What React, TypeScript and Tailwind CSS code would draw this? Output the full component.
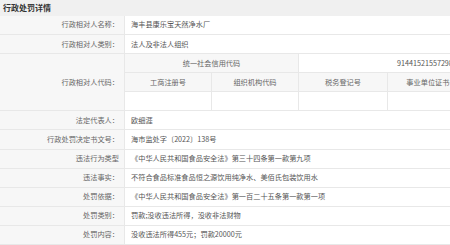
import React from 'react';

const rowsTop = [
  { label: '行政相对人名称：', value: '海丰县康乐宝天然净水厂' },
  { label: '行政相对人类别：', value: '法人及非法人组织' },
];

const rowsBottom = [
  { label: '法定代表人：', value: '欧细涯' },
  { label: '行政处罚决定书文号：', value: '海市监处字〔2022〕138号' },
  { label: '违法行为类型', value: '《中华人民共和国食品安全法》第三十四条第一款第九项' },
  { label: '违法事实：', value: '不符合食品标准食品恒之源饮用纯净水、美佰氏包装饮用水' },
  { label: '处罚依据：', value: '《中华人民共和国食品安全法》第一百二十五条第一款第一项' },
  { label: '处罚类别：', value: '罚款;没收违法所得，没收非法财物' },
  { label: '处罚内容：', value: '没收违法所得455元；罚款20000元' },
];

const codeHeads = ['工商注册号', '组织机构代码', '税务登记号', '事业单位证书号'];
const codeWidths = ['w-[87px]', 'w-[87px]', 'w-[89px]', 'w-[88px]'];

const Row = ({ label, value }: { label: string; value: string }) => (
  <div className="flex h-[19.1px] border-b border-[#e8e8e8]">
    <div className="w-[125px] shrink-0 bg-[#f7f7f7] border-r border-[#e8e8e8] flex items-center justify-end pr-[5px] text-[#666]">
      {label}
    </div>
    <div className="flex items-center pl-[6px] text-[#555] whitespace-nowrap">{value}</div>
  </div>
);

export default function App() {
  return (
    <div
      className="w-[450px] h-[245px] overflow-hidden bg-white text-[7.2px] leading-none"
      style={{ fontFamily: '"Noto Sans CJK SC", "Noto Sans", sans-serif' }}
    >
      <div className="h-[16px] bg-[#f0f0f0] flex items-center pl-[3px] text-[8px] font-bold text-[#333]">
        行政处罚详情
      </div>

      {rowsTop.map((r) => (
        <Row key={r.label} {...r} />
      ))}

      {/* 行政相对人代码 with nested code table */}
      <div className="flex border-b border-[#e8e8e8]">
        <div className="w-[125px] shrink-0 bg-[#f7f7f7] border-r border-[#e8e8e8] flex items-center justify-end pr-[5px] text-[#666]">
          行政相对人代码：
        </div>
        <div className="flex flex-col w-[351px] shrink-0">
          <div className="flex h-[19.1px] border-b border-[#e8e8e8]">
            <div className="w-[174px] shrink-0 bg-[#f7f7f7] border-r border-[#e8e8e8] flex items-center justify-center text-[#666]">
              统一社会信用代码
            </div>
            <div className="flex-1 flex items-center pl-[98px] text-[#555] whitespace-nowrap">91441521557298061L</div>
          </div>
          <div className="flex h-[19.1px] border-b border-[#e8e8e8]">
            {codeHeads.map((h, i) => (
              <div
                key={h}
                className={`${codeWidths[i]} shrink-0 bg-[#f7f7f7] border-r border-[#e8e8e8] flex items-center justify-center text-[#666] whitespace-nowrap`}
              >
                {h}
              </div>
            ))}
          </div>
          <div className="flex h-[18px]">
            {codeHeads.map((h, i) => (
              <div key={h} className={`${codeWidths[i]} shrink-0 border-r border-[#e8e8e8]`} />
            ))}
          </div>
        </div>
      </div>

      {rowsBottom.map((r) => (
        <Row key={r.label} {...r} />
      ))}
    </div>
  );
}
